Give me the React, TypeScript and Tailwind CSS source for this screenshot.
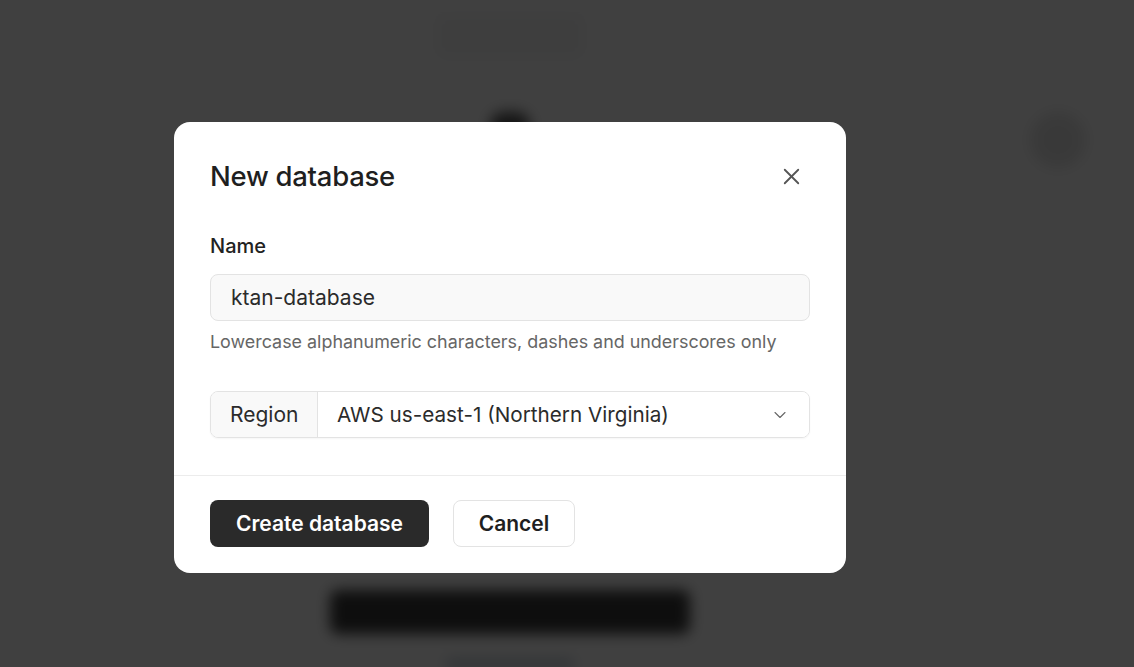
import { X, ChevronDown } from "lucide-react";

function BackdropPage() {
  return (
    <div className="relative h-full w-full bg-white blur-[7px]">
      <div className="flex flex-col items-center pt-4 pr-[114px]">
        <div className="h-10 w-36 rounded-md border border-gray-200 bg-[#f7f7f7]" />
        <div className="mt-14 h-7 w-10 rounded-full bg-[#555]" />
      </div>
      <div className="absolute top-[112px] right-[48px] h-14 w-14 rounded-full bg-[#e4e4e4]" />
      <div className="mt-[450px] flex flex-col items-center pr-[114px]">
        <div className="h-11 w-[360px] rounded-lg bg-[#3a3a3a]" />
        <div className="mt-6 h-3 w-32 rounded bg-[#c8d3dc]" />
      </div>
    </div>
  );
}

export default function App() {
  return (
    <div className="relative h-[667px] w-full overflow-hidden font-['Inter',sans-serif]">
      <BackdropPage />
      <div className="absolute inset-0 bg-black/75" />

      <div className="absolute inset-0 flex items-start justify-start pt-[122px] pl-[174px]">
        <div className="flex w-[672px] flex-col rounded-2xl bg-white">
          <div className="px-9 pt-[38px] pb-[37px]">
            <div className="flex items-center justify-between">
              <h2 className="text-[27.5px] leading-8 font-medium tracking-[-0.01em] text-[#1f1f1f]">
                New database
              </h2>
              <button type="button" className="mr-[5px] text-[#555]">
                <X className="h-[27px] w-[27px]" strokeWidth={1.6} />
              </button>
            </div>

            <label className="mt-[42px] block text-[20px] leading-6 font-medium text-[#222]">
              Name
            </label>
            <div className="mt-[16px] flex h-[47px] items-center rounded-lg border border-[#e3e3e3] bg-[#f9f9f9] px-5 text-[21px] text-[#2b2b2b]">
              ktan-database
            </div>
            <p className="mt-[9px] text-[17.9px] leading-6 text-[#666]">
              Lowercase alphanumeric characters, dashes and underscores only
            </p>

            <div className="mt-[37px] flex h-[47px] items-stretch overflow-hidden rounded-lg border border-[#e3e3e3] shadow-[0_1px_2px_rgba(0,0,0,0.04)]">
              <div className="flex w-[107px] items-center border-r border-[#e3e3e3] bg-[#f9f9f9] px-[19px] text-[21px] text-[#2b2b2b]">
                Region
              </div>
              <div className="flex flex-1 items-center justify-between bg-white pr-[19px] pl-[19px] text-[20.7px] text-[#2b2b2b]">
                <span>AWS us-east-1 (Northern Virginia)</span>
                <ChevronDown className="h-[20px] w-[20px] text-[#666]" strokeWidth={1.3} />
              </div>
            </div>
          </div>

          <div className="flex gap-6 border-t border-[#ececec] px-9 pt-6 pb-[26px]">
            <button
              type="button"
              className="h-[47px] w-[219px] rounded-lg bg-[#2a2a2a] text-[21px] font-semibold text-white"
            >
              Create database
            </button>
            <button
              type="button"
              className="h-[47px] w-[122px] rounded-lg border border-[#e3e3e3] bg-white text-[21px] font-semibold text-[#1f1f1f]"
            >
              Cancel
            </button>
          </div>
        </div>
      </div>
    </div>
  );
}
